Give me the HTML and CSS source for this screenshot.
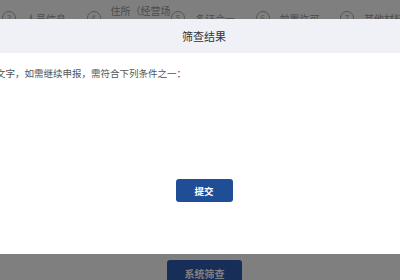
FILE: index.html
```html
<!DOCTYPE html>
<html lang="zh">
<head>
<meta charset="utf-8">
<title>筛查结果</title>
<link rel="stylesheet" href="styles.css">
</head>
<body>
<div class="page">
  <div class="steps">
    <div class="step"><span class="num">3</span><span class="label">人员信息</span></div>
    <div class="step"><span class="num">4</span><span class="label">住所（经营场所）</span></div>
    <div class="step"><span class="num">5</span><span class="label">多证合一</span></div>
    <div class="step"><span class="num">6</span><span class="label">前置许可</span></div>
    <div class="step"><span class="num">7</span><span class="label">其他材料上传</span></div>
  </div>
  <div class="footer">
    <button class="btn-check">系统筛查</button>
  </div>
</div>
<div class="mask"></div>
<div class="dialog">
  <div class="dialog-head">筛查结果</div>
  <div class="dialog-body">
    <p class="msg">文字，如需继续申报，需符合下列条件之一：</p>
    <button class="btn-submit">提交</button>
  </div>
</div>
</body>
</html>
```
FILE: styles.css
```css
html, body {
  margin: 0;
  padding: 0;
}
body {
  width: 400px;
  height: 280px;
  overflow: hidden;
  position: relative;
  background: #ffffff;
  font-family: "Noto Sans CJK SC", "Noto Sans", sans-serif;
}
.page {
  height: 280px;
  display: flex;
  flex-direction: column;
  justify-content: space-between;
}
.steps {
  display: flex;
  padding-left: 2px;
  padding-top: 4px;
}
.step {
  width: 84.5px;
  flex: none;
  display: flex;
  align-items: center;
  gap: 10px;
  height: 28px;
}
.num {
  width: 12px;
  height: 12px;
  border: 1px solid #aaaaaa;
  border-radius: 50%;
  font-size: 8px;
  line-height: 12px;
  text-align: center;
  color: #aaaaaa;
  flex: none;
}
.label {
  font-size: 10px;
  line-height: 15px;
  color: #999999;
  max-width: 62px;
  white-space: normal;
  overflow: hidden;
  max-height: 30px;
}
.footer {
  display: flex;
  justify-content: center;
  padding-left: 9px;
}
.btn-check {
  width: 75px;
  height: 26px;
  margin-bottom: -6px;
  border: none;
  border-radius: 3px;
  background: #2f5cb0;
  color: #ffffff;
  font-family: inherit;
  font-size: 10px;
  font-weight: bold;
}
.mask {
  position: absolute;
  inset: 0;
  background: rgba(0, 0, 0, 0.5);
}
.dialog {
  position: absolute;
  top: 19px;
  left: -20px;
  width: 448px;
  height: 235px;
  background: #ffffff;
  display: flex;
  flex-direction: column;
}
.dialog-head {
  height: 34px;
  background: #eff1f6;
  display: flex;
  align-items: center;
  justify-content: center;
  font-size: 11px;
  color: #333333;
}
.dialog-body {
  display: flex;
  flex-direction: column;
  align-items: center;
  padding: 13px 16px 0;
}
.msg {
  align-self: stretch;
  margin: 0;
  font-size: 9.5px;
  line-height: 14px;
  color: #555555;
}
.btn-submit {
  margin-top: 99px;
  width: 57px;
  height: 23px;
  border: none;
  border-radius: 3px;
  background: #1f4e97;
  color: #ffffff;
  font-family: inherit;
  font-size: 9.5px;
  font-weight: bold;
}
```
